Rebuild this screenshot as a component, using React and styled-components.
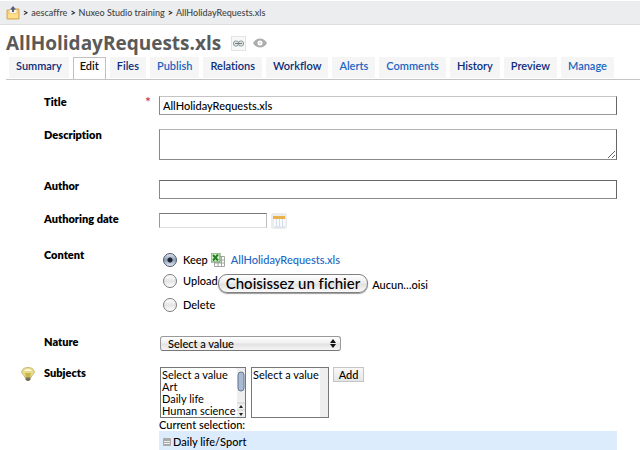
import React, { useRef, useState } from "react";
import styled, { createGlobalStyle } from "styled-components";

const Global = createGlobalStyle`
  * { box-sizing: border-box; }
  body {
    margin: 0;
    background: #fff;
    color: #000;
    font: 500 11px/14px Lato, "Open Sans", sans-serif;
    font-variant-ligatures: none;
  }
  input, textarea, select, button { font: inherit; font-variant-ligatures: none; color: inherit; margin: 0; }
`;

const Page = styled.div`
  min-height: 100vh;
  overflow: hidden;
`;

const Breadcrumb = styled.nav`
  display: flex;
  align-items: center;
  gap: 3px;
  height: 24px;
  margin-top: 1px;
  padding: 0 6px;
  background: #ecedef;
  border-bottom: 1px solid #dcdee0;
  font-size: 9px;
  white-space: nowrap;
`;

const Crumb = styled.a`
  color: #444;
  text-decoration: none;
`;

const Separator = styled.span`
  color: #111;
  font-weight: 700;
`;

const CrumbIcon = styled.svg`
  display: block;
  width: 14px;
  height: 14px;
`;

const Heading = styled.header`
  display: flex;
  align-items: center;
  height: 32px;
  padding: 4px 6px 0;
`;

const Title = styled.h1`
  margin: 0 10px 0 0;
  color: #5a5a5a;
  font-family: "Open Sans", sans-serif;
  font-size: 19px;
  line-height: 24px;
  font-weight: 700;
`;

const IconButton = styled.button`
  display: flex;
  align-items: center;
  justify-content: center;
  width: ${(p) => (p.$large ? "16px" : "15px")};
  height: ${(p) => (p.$large ? "16px" : "15px")};
  margin-right: 6px;
  padding: 0;
  background: ${(p) => (p.$framed ? "#f7f8f8" : "none")};
  border: ${(p) => (p.$framed ? "1px solid #e2e4e4" : "0")};
`;

const Tabs = styled.nav`
  display: flex;
  gap: 4px;
  height: 23px;
  margin-left: 6px;
  padding: 0 3px;
  border-bottom: 1px solid #c4c4c4;
`;

const Tab = styled.a`
  height: ${(p) => (p.$active ? "22px" : "21px")};
  padding: ${(p) => (p.$active ? "1px 6px" : "2px 7px")};
  border: ${(p) => (p.$active ? "1px solid #c0c0c0" : "0")};
  border-bottom: 0;
  background: ${(p) => (p.$active ? "#fff" : "#f5f5f5")};
  color: ${(p) => (p.$active ? "#111" : p.$light ? "#1a66c2" : "#0a2c7c")};
  font-weight: 600;
  text-decoration: none;
  white-space: nowrap;
`;

const Form = styled.form`
  padding: 16px 23px 0 20px;
`;

const Row = styled.div`
  display: grid;
  grid-template-columns: 24px 101px 14px minmax(0, 1fr);
  align-items: start;
  margin-bottom: ${(p) => p.$gap}px;
`;

const Name = styled.label`
  grid-column: 2;
  line-height: 12px;
  font-weight: 800;
`;

const Required = styled.span`
  color: #d42020;
  font-size: 14px;
  line-height: 12px;
`;

const Field = styled.div`
  grid-column: 4;
  display: ${(p) => (p.$inline ? "flex" : "block")};
  gap: 4px;
  min-width: 0;
`;

const TextInput = styled.input`
  display: block;
  width: ${(p) => (p.$short ? "108px" : "100%")};
  height: ${(p) => (p.$short ? "15px" : "19px")};
  padding: 0 3px;
  border: 1px solid #888;
  border-color: ${(p) => (p.$short ? "#777 #bbb #ddd #999" : p.$dark ? "#666 #666 #888 #888" : "#c4c4c4 #666 #999 #888")};
  border-radius: 0;
  background: #fff;
`;

const TextArea = styled.textarea`
  display: block;
  width: 100%;
  height: 31px;
  padding: 2px 3px;
  border: 1px solid #888;
  border-color: #b4b4b4 #666 #888 #888;
  border-radius: 0;
  resize: vertical;
`;

const Choice = styled.div`
  display: flex;
  align-items: center;
  height: ${(p) => p.$height}px;
  padding-left: 4px;
`;

const ChoiceLabel = styled.label`
  margin-left: 6px;
`;

const Radio = styled.input`
  appearance: none;
  flex: none;
  width: 14px;
  height: 14px;
  border: 1px solid #7c7c7c;
  border-radius: 50%;
  background: linear-gradient(#fff, #e4e4e4 50%, #fff);
  &:checked {
    border-color: #4c5664;
    background: radial-gradient(circle, #1c222c 0 2px, transparent 3px), linear-gradient(#dfe5ee, #8c9cb4 50%, #e4edf6);
  }
`;

const FileLink = styled.a`
  margin-left: 6px;
  color: #1a66c2;
  text-decoration: none;
`;

const FileIcon = styled.svg`
  width: 14px;
  height: 14px;
  margin-left: 3px;
`;

const ChooseButton = styled.button`
  height: 19px;
  margin-top: 4px;
  padding: 0 7px;
  border: 1px solid #808080;
  border-radius: 9px;
  background: linear-gradient(#fff, #ededed 48%, #e0e0e0 52%, #fafafa);
  box-shadow: 0 1px 1px #999;
  font-size: 15px;
  line-height: 17px;
  white-space: nowrap;
`;

const FileStatus = styled.span`
  margin-left: 4px;
  padding-top: 8px;
`;

const SelectWrap = styled.div`
  position: relative;
  width: 181px;
  margin-left: 1px;
`;

const Select = styled.select`
  appearance: none;
  display: block;
  width: 100%;
  height: 15px;
  padding: 0 7px;
  border: 1px solid #999;
  border-bottom-color: #777;
  border-radius: 3px;
  background: linear-gradient(#fff, #f0f0f0 45%, #e2e2e2 55%, #f6f6f6);
  line-height: 13px;
`;

const SelectArrows = styled.svg`
  position: absolute;
  top: 3px;
  right: 5px;
  width: 6px;
  height: 9px;
  pointer-events: none;
`;

const ListWrap = styled.div`
  position: relative;
  flex: none;
  width: ${(p) => p.$width}px;
  margin-left: 1px;
`;

const List = styled.select`
  display: block;
  width: 100%;
  height: 51px;
  padding: 0;
  overflow: hidden;
  border: 1px solid #777;
  border-radius: 0;
  background: #fff;
  option { padding: 0 1px; min-height: 12px; height: 12px; line-height: 12px; }
`;

const ScrollRail = styled.svg`
  position: absolute;
  top: 1px;
  right: 1px;
  width: 8px;
  height: 49px;
  pointer-events: none;
`;

const AddButton = styled.button`
  width: 31px;
  height: 15px;
  padding: 0;
  border: 1px solid #c4c4c4;
  background: linear-gradient(#f8f8f8, #e6e6e6);
  line-height: 13px;
`;

const Caption = styled.div`
  line-height: 13px;
`;

const Selection = styled.div`
  display: flex;
  align-items: center;
  gap: 2px;
  height: 20px;
  padding: 2px 4px 0;
  background: #dcecfd;
`;

const RemoveButton = styled.button`
  display: flex;
  padding: 0;
  border: 0;
  background: none;
`;

const TABS = [
  ["Summary"], ["Edit"], ["Files"], ["Publish", true], ["Relations"], ["Workflow"],
  ["Alerts", true], ["Comments", true], ["History"], ["Preview"], ["Manage", true],
];

function FolderIcon() {
  return (
    <CrumbIcon viewBox="0 0 14 14" aria-hidden="true">
      <path d="M1 4h4l1-1h7v10H1z" fill="#f4ce70" stroke="#d3a957" />
      <path d="M2 8h10v4H2z" fill="#ffdf8b" />
      <path d="M3.500 4h7v3h-7z" fill="#f1f1ee" />
      <path d="M7 0 4 3.500h2V6h2V3.500h2z" fill="#55617c" />
    </CrumbIcon>
  );
}

function ChainIcon() {
  return (
    <svg width="11" height="7" viewBox="0 0 11 7" aria-hidden="true">
      <rect x="0.500" y="1" width="5" height="5" rx="2" fill="#dfe4e4" stroke="#8b9898" />
      <rect x="5.500" y="1" width="5" height="5" rx="2" fill="#dfe4e4" stroke="#8b9898" />
      <path d="M2 3.500h7" stroke="#738080" />
    </svg>
  );
}

function EyeIcon() {
  return (
    <svg width="14" height="10" viewBox="0 0 14 10" aria-hidden="true">
      <path d="M0 5C3-1 11-1 14 5 11 11 3 11 0 5z" fill="#adadad" />
      <circle cx="7" cy="5" r="2.500" fill="#fff" />
      <circle cx="7" cy="5" r="1" fill="#ddd" />
    </svg>
  );
}

function CalendarIcon() {
  return (
    <svg width="16" height="16" viewBox="0 0 16 16" aria-hidden="true">
      <rect width="16" height="16" rx="2" fill="#ececec" />
      <path d="M3 6h11v8H3z" fill="#f8fafe" />
      <path d="M5.500 6v8M8.500 6v8M11.500 6v8M3 14h11" stroke="#d4ddea" />
      <path d="M2 3h12v3H2z" fill="#eab04a" />
    </svg>
  );
}

function BulbIcon() {
  return (
    <svg width="15" height="15" viewBox="-1 0 15 15" aria-hidden="true">
      <path d="M7 .5C3 .5.8 2.500.8 5c0 2.500 2.700 3 3.200 5.500h6C10.500 8 13.200 7.500 13.200 5 13.200 2.500 11 .5 7 .5z" fill="#e8dc8c" stroke="#c4b878" />
      <path d="M3 4c1-2.500 7-2.500 8 0z" fill="#fffbe2" />
      <path d="M4 6h6l-1 4H5z" fill="#c9b74c" />
      <path d="M4.500 10.500h5v2L8 14H6l-1.500-1.500z" fill="#777059" />
    </svg>
  );
}

function Spreadsheet() {
  return (
    <FileIcon viewBox="0 0 14 14" aria-hidden="true">
      <path d="M3.500 3.500h10v10h-10zM7 3v10M10.500 3v10M4 7h9M4 10h9" fill="#fff" stroke="#a0a6a0" />
      <rect width="9" height="9" fill="#d6efcb" stroke="#67965a" />
      <path d="m2 2 5 5.500M7 1.500 2 7.500" stroke="#258026" strokeWidth="2" />
    </FileIcon>
  );
}

export default function App() {
  const picker = useRef(null);
  const [mode, setMode] = useState("Keep");
  const radio = (value) => (
    <>
      <Radio type="radio" name="content" id={value} checked={mode === value} onChange={() => setMode(value)} />
      <ChoiceLabel htmlFor={value}>{value}</ChoiceLabel>
    </>
  );
  return (
    <Page>
      <Global />
      <Breadcrumb aria-label="Breadcrumb">
        <Crumb href="#root" aria-label="Parent folder"><FolderIcon /></Crumb>
        <Separator>&gt;</Separator><Crumb href="#user">aescaffre</Crumb>
        <Separator>&gt;</Separator><Crumb href="#training">Nuxeo Studio training</Crumb>
        <Separator>&gt;</Separator><Crumb href="#file">AllHolidayRequests.xls</Crumb>
      </Breadcrumb>
      <Heading>
        <Title>AllHolidayRequests.xls</Title>
        <IconButton $framed aria-label="Permanent link"><ChainIcon /></IconButton>
        <IconButton aria-label="Watch"><EyeIcon /></IconButton>
      </Heading>
      <Tabs aria-label="Document">
        {TABS.map(([name, light]) => (
          <Tab key={name} href={`#${name}`} $light={light} $active={name === "Edit"}>{name}</Tab>
        ))}
      </Tabs>
      <Form onSubmit={(e) => e.preventDefault()}>
        <Row $gap={14}>
          <Name htmlFor="title">Title</Name><Required>*</Required>
          <Field><TextInput id="title" defaultValue="AllHolidayRequests.xls" /></Field>
        </Row>
        <Row $gap={20}>
          <Name htmlFor="description">Description</Name>
          <Field><TextArea id="description" /></Field>
        </Row>
        <Row $gap={14}>
          <Name htmlFor="author">Author</Name>
          <Field><TextInput id="author" $dark /></Field>
        </Row>
        <Row $gap={20}>
          <Name htmlFor="date">Authoring date</Name>
          <Field $inline>
            <TextInput id="date" $short />
            <IconButton type="button" $large aria-label="Open calendar"><CalendarIcon /></IconButton>
          </Field>
        </Row>
        <Row $gap={18} role="radiogroup" aria-labelledby="content">
          <Name as="span" id="content">Content</Name>
          <Field>
            <Choice $height={22}>{radio("Keep")}<Spreadsheet /><FileLink href="#download">AllHolidayRequests.xls</FileLink></Choice>
            <Choice $height={20}>
              {radio("Upload")}
              <ChooseButton type="button" onClick={() => picker.current.click()}>Choisissez un fichier</ChooseButton>
              <input ref={picker} type="file" hidden aria-label="Choisissez un fichier" />
              <FileStatus>Aucun…oisi</FileStatus>
            </Choice>
            <Choice $height={27}>{radio("Delete")}</Choice>
          </Field>
        </Row>
        <Row $gap={16}>
          <Name htmlFor="nature">Nature</Name>
          <Field>
            <SelectWrap>
              <Select id="nature"><option>Select a value</option></Select>
              <SelectArrows viewBox="0 0 6 9"><path d="M3 0 6 4H0zM0 5h6L3 9z" fill="#111" /></SelectArrows>
            </SelectWrap>
          </Field>
        </Row>
        <Row $gap={0}>
          <BulbIcon />
          <Name htmlFor="subjects">Subjects</Name>
          <Field>
            <Field $inline>
              <ListWrap $width={86}>
                <List id="subjects" size={4}>
                  <option>Select a value</option><option>Art</option><option>Daily life</option><option>Human science</option>
                </List>
                <ScrollRail viewBox="0 0 8 49">
                  <path d="M0 0h8v49H0z" fill="#eee" />
                  <rect x="1" y="4" width="6" height="19" rx="3" fill="#a9bad2" stroke="#667891" />
                  <path d="M0 35h8M0 42h8" stroke="#ccc" />
                  <path d="m2 40 2-3 2 3zM2 45h4l-2 3z" fill="#222" />
                </ScrollRail>
              </ListWrap>
              <ListWrap $width={78}>
                <List size={4} aria-label="Subject detail"><option>Select a value</option></List>
                <ScrollRail viewBox="0 0 8 49"><path d="M0 0h8v49H0z" fill="#eee" /></ScrollRail>
              </ListWrap>
              <AddButton type="button">Add</AddButton>
            </Field>
            <Caption>Current selection:</Caption>
            <Selection>
              <RemoveButton type="button" aria-label="Remove Daily life/Sport">
                <svg width="8" height="8" viewBox="0 0 8 8"><rect width="8" height="8" rx="1" fill="#aaa" /><path d="M1 3.500h6M1 5.500h6" stroke="#eee" /></svg>
              </RemoveButton>
              Daily life/Sport
            </Selection>
          </Field>
        </Row>
      </Form>
    </Page>
  );
}
